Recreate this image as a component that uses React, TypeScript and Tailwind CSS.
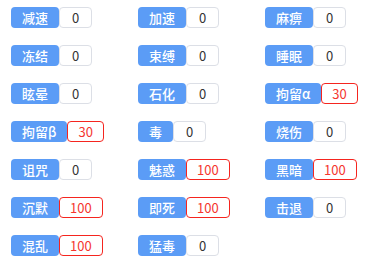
import React from "react";

type Item = { name: string; value: number };

const items: Item[] = [
  { name: "减速", value: 0 },
  { name: "加速", value: 0 },
  { name: "麻痹", value: 0 },
  { name: "冻结", value: 0 },
  { name: "束缚", value: 0 },
  { name: "睡眠", value: 0 },
  { name: "眩晕", value: 0 },
  { name: "石化", value: 0 },
  { name: "拘留α", value: 30 },
  { name: "拘留β", value: 30 },
  { name: "毒", value: 0 },
  { name: "烧伤", value: 0 },
  { name: "诅咒", value: 0 },
  { name: "魅惑", value: 100 },
  { name: "黑暗", value: 100 },
  { name: "沉默", value: 100 },
  { name: "即死", value: 100 },
  { name: "击退", value: 0 },
  { name: "混乱", value: 100 },
  { name: "猛毒", value: 0 },
];

const App: React.FC = () => {
  return (
    <div
      className="w-[370px] h-[264px] bg-white pl-[11px] pt-[7px] grid grid-cols-[127px_127px_110px] gap-y-[17px] content-start"
      style={{ fontFamily: '"Noto Sans CJK SC", "Liberation Sans", sans-serif' }}
    >
      {items.map((it) => {
        const hot = it.value > 0;
        return (
          <div key={it.name} className="flex items-stretch h-[21px]">
            <span className="flex items-center bg-[#5b9cf6] text-white text-[13px] font-medium px-[11px] rounded-[4px] leading-none">
              {it.name}
            </span>
            <span
              className={
                hot
                  ? "flex items-center justify-center min-w-[33px] px-[10px] border border-[#f5251f] text-[#f5362f] text-[13px] rounded-[4px] leading-none"
                  : "flex items-center justify-center min-w-[33px] px-[10px] border border-[#dcdfe6] text-[#333] text-[13px] rounded-[4px] leading-none"
              }
            >
              {it.value}
            </span>
          </div>
        );
      })}
    </div>
  );
};

export default App;
